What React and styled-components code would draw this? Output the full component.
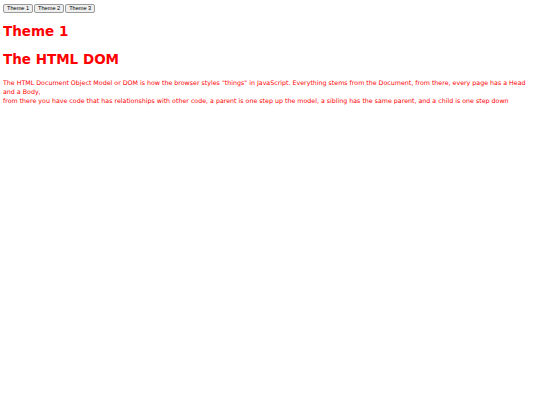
import React, { useState } from "react";
import styled, { createGlobalStyle } from "styled-components";

const themes = {
  "Theme 1": { color: "#ff0000", font: '"Comic Sans MS", "DejaVu Sans", sans-serif' },
  "Theme 2": { color: "#0000ff", font: '"Liberation Serif", serif' },
  "Theme 3": { color: "#008000", font: '"Liberation Mono", monospace' },
};

const GlobalStyle = createGlobalStyle`
  html, body {
    background: #ffffff;
  }
  body {
    margin: 3px;
  }
`;

const Toolbar = styled.div`
  display: flex;
  gap: 1px;
  padding-top: 1px;
`;

const ThemeButton = styled.button`
  font-family: "Liberation Sans", Arial, sans-serif;
  font-size: 5.6px;
  line-height: 7px;
  white-space: nowrap;
  color: #000;
  background: #efefef;
  border: 1px solid #9a9a9a;
  border-radius: 2px;
  padding: 0 3px;
  height: 9px;
  margin: 0;
`;

const Page = styled.div`
  color: ${(p) => p.theme.color};
  font-family: ${(p) => p.theme.font};
`;

const Heading = styled.h1`
  font-size: 13.5px;
  font-weight: bold;
  margin: 9px 0;
  line-height: 19px;
`;

const Text = styled.p`
  font-size: 6.3px;
  line-height: 9px;
  margin: 9px 0;
`;

export default function App() {
  const [name, setName] = useState("Theme 1");
  const theme = themes[name];
  return (
    <>
      <GlobalStyle />
      <Toolbar>
        {Object.keys(themes).map((t) => (
          <ThemeButton key={t} onClick={() => setName(t)}>
            {t}
          </ThemeButton>
        ))}
      </Toolbar>
      <Page theme={theme}>
        <Heading>{name}</Heading>
        <Heading>The HTML DOM</Heading>
        <Text>
          The HTML Document Object Model or DOM is how the browser styles "things" in JavaScript.
          Everything stems from the Document, from there, every page has a Head and a Body,
          <br />
          from there you have code that has relationships with other code, a parent is one step up
          the model, a sibling has the same parent, and a child is one step down
        </Text>
      </Page>
    </>
  );
}
